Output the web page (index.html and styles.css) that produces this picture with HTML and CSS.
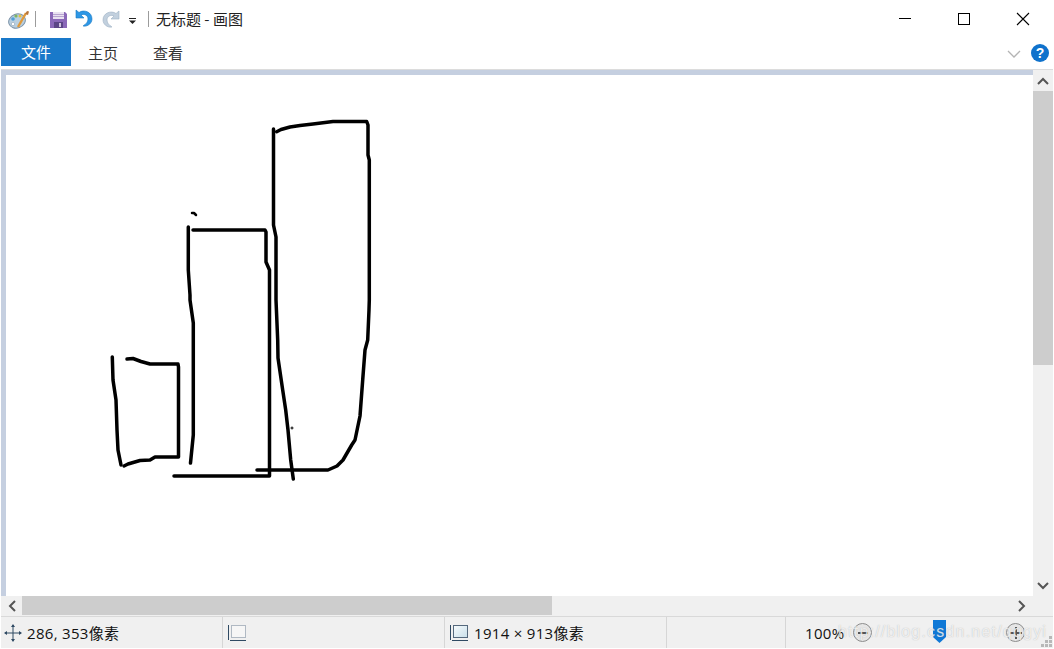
FILE: index.html
```html
<!DOCTYPE html>
<html lang="zh">
<head>
<meta charset="utf-8">
<title>无标题 - 画图</title>
<link rel="stylesheet" href="styles.css">
</head>
<body>
<div class="window">
  <header class="titlebar">
    <svg class="ico-paint" width="22" height="20" viewBox="0 0 22 20">
      <ellipse cx="9" cy="11" rx="8.500" ry="7" fill="#b9cfe0" stroke="#7d93a8" transform="rotate(-20 9 11)"/>
      <circle cx="5" cy="9" r="1.800" fill="#4f9fd8"/><circle cx="8" cy="6" r="1.600" fill="#7bb661"/>
      <circle cx="12" cy="6" r="1.500" fill="#e8c040"/><circle cx="5" cy="14" r="1.700" fill="#fff" stroke="#8fa3b5" stroke-width=".6"/>
      <path d="M10 17 L18 3" stroke="#e09a3c" stroke-width="2.400"/>
      <path d="M17 4 L19 1 L21 1.500 L20 5z" fill="#b8763a"/>
    </svg>
    <span class="qsep sep-a"></span>
    <svg class="ico-save" width="17" height="16" viewBox="0 0 17 16">
      <path d="M0 0H15L17 2V16H0z" fill="#8a68b8"/>
      <rect x="3" y="0" width="11" height="7" fill="#e9e2f1"/>
      <rect x="3" y="2" width="11" height="1" fill="#b8a4d0"/>
      <rect x="3" y="4" width="11" height="1" fill="#b8a4d0"/>
      <rect x="4" y="10" width="9" height="6" fill="#5b4585"/>
      <rect x="9" y="11" width="2" height="4" fill="#cfc3de"/>
    </svg>
    <svg class="ico-undo" width="18" height="19" viewBox="0 0 18 19">
      <path d="M1 1V9H9L6 6C9 4.500 13 6 13 10C13 13 11 15 8 17C13 18 17 14 17 10C17 3 9 0 4 3.500L1 1z" fill="#2d97e6" stroke="#1a78c2" stroke-width=".6"/>
    </svg>
    <svg class="ico-redo" width="18" height="19" viewBox="0 0 18 19">
      <path d="M17 1V9H9L12 6C9 4.500 5 6 5 10C5 13 7 15 10 17C5 18 1 14 1 10C1 3 9 0 14 3.500L17 1z" fill="#c2d0de" stroke="#9fb2c4" stroke-width=".6"/>
    </svg>
    <svg class="ico-drop" width="8" height="6" viewBox="0 0 8 6">
      <rect x="0" y="0" width="7" height="1" fill="#222"/>
      <path d="M0 2.500H7L3.500 6z" fill="#222"/>
    </svg>
    <span class="qsep sep-b"></span>
    <span class="title">无标题 - 画图</span>
    <div class="controls">
      <svg class="ctl" width="14" height="14" viewBox="0 0 14 14"><path d="M1 6.500H13" stroke="#000" stroke-width="1"/></svg>
      <svg class="ctl" width="14" height="14" viewBox="0 0 14 14"><rect x="1.500" y="1.500" width="11" height="11" fill="none" stroke="#000"/></svg>
      <svg class="ctl" width="14" height="14" viewBox="0 0 14 14"><path d="M1 1L13 13M13 1L1 13" stroke="#000" stroke-width="1.100"/></svg>
    </div>
  </header>
  <nav class="tabs">
    <span class="tab tab-file">文件</span>
    <span class="tab tab-home">主页</span>
    <span class="tab tab-view">查看</span>
    <svg class="chev" width="14" height="8" viewBox="0 0 14 8"><path d="M1 1L7 7L13 1" fill="none" stroke="#b4b4b4" stroke-width="1.300"/></svg>
    <span class="help">?</span>
  </nav>
  <main class="work">
    <div class="viewport">
      <div class="canvas">
        <svg class="drawing" width="1054" height="649" viewBox="0 0 1054 649">
          <g fill="none" stroke="#000" stroke-width="3.500" stroke-linejoin="round" stroke-linecap="round">
            <path d="M273.500 129V225L276 237V300L277.700 340L278 358L282.700 390L285.700 410L288 430L290.700 460L293.300 479"/>
            <path d="M276.700 131.700L281 129.500L290 127L300 125.500L313 124L333 121.500H366.700L368 125V155L369.300 160V300L369 310L367.700 340L365 350L362.700 380L360 416L355 440L351.700 445L343 460L337 466L328 470H281.700L272 470H257"/>
            <path d="M188.300 227V270L190 295V300L193.300 323V435L190.500 463"/>
            <path d="M193 230H265L266 232V262L269.500 270V476H174"/>
            <path d="M192 213H194L196 215" stroke-width="2.500"/>
            <path d="M112.300 357L113 380L116 400L117 430L118 450L121 465"/>
            <path d="M127 359L133 358.500L141 361.500L150 364H178L178.500 367V457H155L150 460L140 460.500L128 464L124 466"/>
          </g>
          <path d="M292 426.500V429.500M290.500 428H293.500" stroke="#000" stroke-width="1"/>
        </svg>
      </div>
    </div>
    <div class="vscroll">
      <span class="sbtn"><svg width="12" height="8" viewBox="0 0 12 8"><path d="M1 7L6 2L11 7" fill="none" stroke="#555" stroke-width="2"/></svg></span>
      <span class="vthumb"></span>
      <span class="vtrack"></span>
      <span class="sbtn"><svg width="12" height="8" viewBox="0 0 12 8"><path d="M1 1L6 6L11 1" fill="none" stroke="#555" stroke-width="2"/></svg></span>
    </div>
  </main>
  <div class="hscroll">
    <span class="hbtn"><svg width="8" height="12" viewBox="0 0 8 12"><path d="M7 1L2 6L7 11" fill="none" stroke="#555" stroke-width="2"/></svg></span>
    <span class="hthumb"></span>
    <span class="htrack"></span>
    <span class="hbtn"><svg width="8" height="12" viewBox="0 0 8 12"><path d="M1 1L6 6L1 11" fill="none" stroke="#555" stroke-width="2"/></svg></span>
    <span class="hcorner"></span>
  </div>
  <footer class="status">
    <div class="cell cell-pos">
      <svg width="18" height="18" viewBox="0 0 18 18"><path d="M9 1V17M1 9H17" stroke="#2f4a63" stroke-width="1"/><path d="M9 0L11 3H7zM9 18L11 15H7zM0 9L3 7V11zM18 9L15 7V11z" fill="#2f4a63"/></svg>
      <span>286, 353像素</span>
    </div>
    <div class="cell cell-sel">
      <svg width="20" height="18" viewBox="0 0 20 18"><path d="M1.500 1V16M3 16.500H19" stroke="#2f4a63"/><rect x="4.500" y="1.500" width="14" height="12" fill="#f6f6f6" stroke="#6d7f92" stroke-dasharray="1 1"/></svg>
    </div>
    <div class="cell cell-size">
      <svg width="20" height="18" viewBox="0 0 20 18"><defs><linearGradient id="sg" x1="0" y1="0" x2="1" y2="1"><stop offset="0" stop-color="#f7fbfd"/><stop offset="1" stop-color="#c9dfe9"/></linearGradient></defs><path d="M1.500 1V16M3 16.500H19" stroke="#2f4a63"/><rect x="4.500" y="1.500" width="14" height="12" fill="url(#sg)" stroke="#55697d"/></svg>
      <span>1914 × 913像素</span>
    </div>
    <div class="cell cell-blank"></div>
    <div class="cell cell-zoom">
      <span class="pct">100%</span>
      <span class="zbtn zminus"><svg width="10" height="2" viewBox="0 0 10 2"><rect width="10" height="2" fill="#555"/></svg></span>
      <svg class="thumb" width="13" height="23" viewBox="0 0 13 23"><path d="M0 0H13V17L6.500 23L0 17z" fill="#0f78d6"/></svg>
      <span class="zbtn zplus"><svg width="12" height="12" viewBox="0 0 12 12"><path d="M6 0V12M0 6H12" stroke="#555" stroke-width="2"/></svg></span>
    </div>
    <svg class="grip" width="11" height="11" viewBox="0 0 11 11"><path d="M8 0h3v3H8zM4 4h3v3H4zM8 4h3v3H8zM0 8h3v3H0zM4 8h3v3H4zM8 8h3v3H8z" fill="#b8b8b8"/></svg>
    <span class="mark">http://blog.csdn.net/qqgyi</span>
  </footer>
</div>
</body>
</html>
```

FILE: styles.css
```css
* { box-sizing: border-box; }
html, body { margin: 0; height: 100%; background: #fff; overflow: hidden; }
body { font-family: "Noto Sans CJK SC", "Noto Sans", sans-serif; color: #000; }
.window { width: 1052px; height: 648px; margin-left: 1px; display: flex; flex-direction: column; position: relative; }

.titlebar { height: 38px; display: flex; align-items: center; padding-left: 7px; flex: none; }
.ico-paint { margin-top: 1px; }
.qsep { width: 1px; height: 16px; background: #9c9c9c; flex: none; }
.sep-a { margin: 0 0 0 5px; }
.ico-save { margin-left: 14px; margin-top: 1px; }
.ico-undo { margin-left: 8px; margin-top: -1px; }
.ico-redo { margin-left: 9px; margin-top: 1px; }
.ico-drop { margin-left: 9px; margin-top: 4px; }
.sep-b { margin-left: 11px; }
.title { margin-left: 7px; font-size: 15px; line-height: 20px; white-space: nowrap; color: #222; }
.controls { margin-left: auto; display: flex; gap: 45px; padding-right: 23px; margin-top: -1px; }
.ctl { display: block; }

.tabs { height: 31px; flex: none; display: flex; align-items: flex-start; }
.tab { font-size: 15px; height: 28px; line-height: 30px; color: #333; text-align: center; }
.tab-file { width: 70px; line-height: 28px; background: #1979ca; color: #fff; }
.tab-home { margin-left: 17px; }
.tab-view { margin-left: 35px; }
.chev { margin-left: auto; margin-right: 10px; margin-top: 12px; }
.help { width: 18px; height: 18px; margin-top: 6px; border-radius: 50%; background: #0f72cc; color: #fff; font: bold 14px/18px "Liberation Sans", sans-serif; text-align: center; margin-right: 4px; }

.work { flex: 1; display: flex; min-height: 0; border-top: 1px solid #dcdcdc; }
.viewport { flex: 1; background: #c5cfe0; padding: 5px 0 0 5px; }
.canvas { background: #fff; height: 100%; position: relative; overflow: hidden; }
.drawing { position: absolute; left: -6px; top: -75px; }

.vscroll { width: 20px; display: flex; flex-direction: column; background: #f0f0f0; }
.sbtn { height: 21px; flex: none; display: flex; align-items: center; justify-content: center; }
.vthumb { height: 274px; background: #cdcdcd; flex: none; }
.vtrack { flex: 1; }

.hscroll { height: 20px; flex: none; display: flex; background: #f0f0f0; }
.hbtn { width: 21px; flex: none; display: flex; align-items: center; justify-content: center; }
.hthumb { width: 530px; height: 19px; background: #cdcdcd; }
.htrack { flex: 1; }
.hcorner { width: 21px; flex: none; }

.status { height: 32px; flex: none; background: #f0f0f0; border-top: 1px solid #d9d9d9; display: flex; position: relative; font-size: 15px; letter-spacing: 0.3px; color: #111; font-family: "Open Sans", "Noto Sans CJK SC", sans-serif; }
.cell { height: 100%; display: flex; align-items: center; border-right: 1px solid #d6d6d6; flex: none; }
.cell svg { flex: none; }
.cell-pos { width: 222px; padding-left: 3px; gap: 5px; }
.cell-sel { width: 222px; padding-left: 4px; }
.cell-size { width: 222px; padding-left: 4px; gap: 5px; }
.cell-blank { width: 119px; }
.cell-zoom { flex: 1; border-right: 0; padding-left: 19px; position: relative; }
.pct { width: 48px; }
.zbtn { width: 19px; height: 19px; border-radius: 50%; border: 1px solid #8c8c8c; background: #e6e6e6; display: flex; align-items: center; justify-content: center; flex: none; }
.thumb { margin-left: 61px; margin-top: -2px; }
.zplus { margin-left: 60px; }
.grip { position: absolute; right: 1px; bottom: 1px; }
.mark { position: absolute; left: 837px; top: 2px; font: 16px/26px "Liberation Sans", sans-serif; letter-spacing: 1.2px; color: rgba(255,255,255,.75); text-shadow: 0 0 1px rgba(130,130,130,.55); white-space: nowrap; pointer-events: none; }
```
